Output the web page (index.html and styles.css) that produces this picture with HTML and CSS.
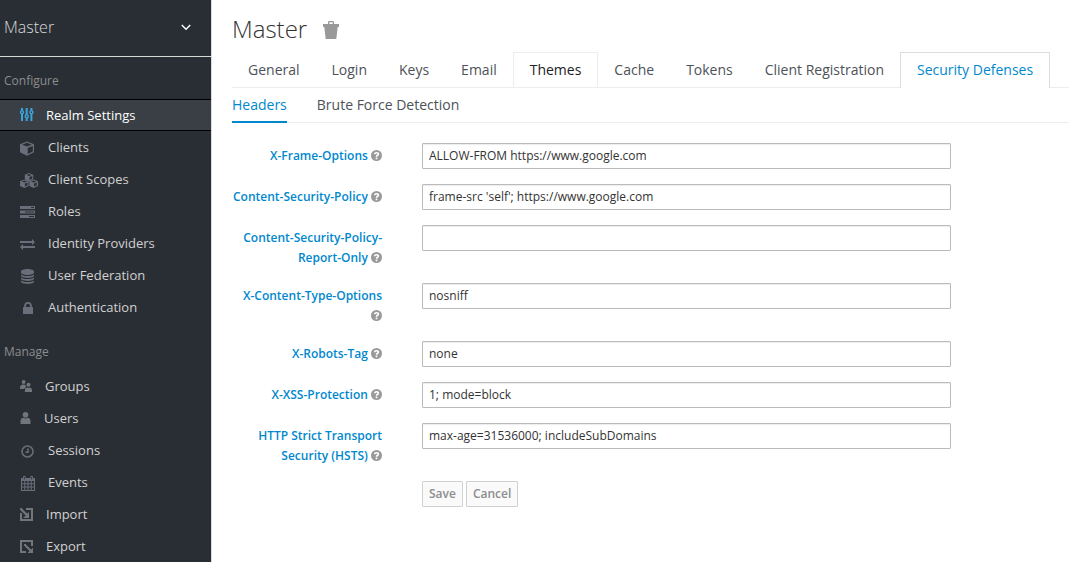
FILE: index.html
```html
<!DOCTYPE html>
<html lang="en">
<head>
<meta charset="utf-8">
<title>Master - Security Defenses</title>
<link rel="stylesheet" href="styles.css">
</head>
<body>
<div class="layout">
  <aside class="sidebar">
    <button class="realm" type="button">
      <span>Master</span>
      <svg class="realm-caret" viewBox="0 0 10 7" aria-hidden="true"><path d="M.8 1 5 5.2 9.200 1"/></svg>
    </button>
    <nav>
      <h2 class="nav-title">Configure</h2>
      <ul class="nav-list nav-configure">
        <li><a class="nav-link active" href="#"><span class="icon icon-14"><svg width="14" height="14" viewBox="0 0 14 14"><path fill-rule="evenodd" d="M1 0h2v2.300q1.200.6 1.200 2T3 6.300V13H1V6.300q-1.200-.6-1.200-2T1 2.300zM2 3.300q-.7 0-.7 1t.7 1 .7-1-.7-1zM5.700 0h2v6.300q1.200.6 1.200 2t-1.200 2V13h-2v-2.700q-1.200-.6-1.200-2t1.200-2zM6.700 7.300q-.7 0-.7 1t.7 1 .7-1-.7-1zM10.400 0h2v2.300q1.200.6 1.200 2t-1.200 2V13h-2V6.300q-1.200-.6-1.200-2t1.200-2zM11.400 3.300q-.7 0-.7 1t.7 1 .7-1-.7-1z"/></svg></span>Realm Settings</a></li>
        <li><a class="nav-link" href="#"><span class="icon icon-16"><svg width="14" height="15" viewBox="0 0 14 15"><path fill-rule="evenodd" d="M7 .5 14 3.300v8L7 14.700 0 11.300v-8zM7 1.800 2.200 3.700 7 5.600l4.800-1.900zM7.700 6.900v6L12.800 10.500V4.900z"/></svg></span>Clients</a></li>
        <li><a class="nav-link" href="#"><span class="icon icon-16"><svg width="18" height="15" viewBox="0 0 18 15"><path fill-rule="evenodd" d="M9 0l4.200 1.700v4.600L9 8.400 4.800 6.300V1.700zM9 1 6.500 2 9 3l2.500-1zM9.500 4v3l2.700-1.300V3z"/><path fill-rule="evenodd" d="M4.400 6.600l4.200 1.700v4.600L4.400 15 0 12.900V8.300zM4.400 7.600l-2.500 1 2.500 1 2.500-1zM4.900 10.600v3l2.700-1.300V9.600z"/><path fill-rule="evenodd" d="M13.600 6.600 18 8.300v4.600L13.600 15l-4.200-2.100V8.300zM13.600 7.600l-2.500 1 2.500 1 2.500-1zM14.100 10.600v3l2.700-1.300V9.600z"/></svg></span>Client Scopes</a></li>
        <li><a class="nav-link" href="#"><span class="icon icon-16"><svg width="15" height="12" viewBox="0 0 15 12"><path fill-rule="evenodd" d="M0 0h15v3H0zM11 1v1h3V1zM0 4.500h15v3H0zM5 5.500v1h9v-1zM0 9h15v3H0zM9 10v1h5v-1z"/></svg></span>Roles</a></li>
        <li><a class="nav-link" href="#"><span class="icon icon-16"><svg width="15" height="11" viewBox="0 0 15 11"><path d="M0 2h12V0l3 3-3 3V4H0zM15 9H3v2L0 8l3-3v2h12z"/></svg></span>Identity Providers</a></li>
        <li><a class="nav-link" href="#"><span class="icon icon-16"><svg class="inset" width="13" height="15" viewBox="0 0 13 15"><path d="M0 2.500C0 1 3 0 6.500 0S13 1 13 2.500v1C13 5 10 6 6.500 6S0 5 0 3.500zM0 5.400C1.300 6.500 3.700 7 6.500 7S11.700 6.500 13 5.400v1.200C13 8 10 9 6.500 9S0 8 0 6.600zM0 8.400C1.300 9.500 3.700 10 6.500 10s5.200-.5 6.500-1.600v1.200c0 1.400-3 2.400-6.500 2.400S0 11 0 9.600zM0 11.400c1.300 1.100 3.700 1.600 6.500 1.600s5.200-.5 6.500-1.600v1.200C13 14 10 15 6.500 15S0 14 0 12.600z"/></svg></span>User Federation</a></li>
        <li><a class="nav-link" href="#"><span class="icon icon-16"><svg class="lock" width="10" height="12" viewBox="0 0 10 12"><path fill-rule="evenodd" d="M1.200 5V3.800a3.800 3.800 0 0 1 7.600 0V5H10v7H0V5zM3 5h4V3.800a2 2 0 0 0-4 0z"/></svg></span>Authentication</a></li>
      </ul>
      <h2 class="nav-title">Manage</h2>
      <ul class="nav-list nav-manage">
        <li><a class="nav-link" href="#"><span class="icon icon-13"><svg width="12" height="12" viewBox="0 0 12 12"><circle cx="3.600" cy="2" r="1.900"/><circle cx="8.500" cy="4.800" r="2"/><path d="M0 9V7.500Q0 4.500 3.600 4.500 5 4.500 5.600 5 5.600 6.500 6.200 7.200 4.500 7.800 4.200 9zM4.900 12v-1.800q0-2.400 2.300-2.600Q8.500 8.500 9.800 7.600 12 7.800 12 10.200V12z"/></svg></span>Groups</a></li>
        <li><a class="nav-link" href="#"><span class="icon icon-12"><svg width="11" height="12" viewBox="0 0 11 12"><circle cx="5.500" cy="2.800" r="2.800"/><path d="M.5 12V9.300Q.5 6 3.500 5.800 5.500 7 7.500 5.800q3 .2 3 3.500V12z"/></svg></span>Users</a></li>
        <li><a class="nav-link" href="#"><span class="icon icon-16"><svg class="inset" width="13" height="13" viewBox="0 0 13 13"><path class="line" d="M6.500 1a5.500 5.500 0 1 0 0 11 5.500 5.500 0 0 0 0-11zM7 3.500v3.700H4.500"/></svg></span>Sessions</a></li>
        <li><a class="nav-link" href="#"><span class="icon icon-16"><svg class="inset" width="14" height="15" viewBox="0 0 14 15"><path fill-rule="evenodd" d="M0 2h2V1a1.300 1.300 0 0 1 2.600 0v1h4.800V1A1.300 1.300 0 0 1 12 1v1h2v13H0zM1 5v2.300h2.300V5zM4.300 5v2.300h2.200V5zM7.500 5v2.300h2.200V5zM10.700 5v2.300H13V5zM1 8.300v2.200h2.300V8.300zM4.300 8.300v2.200h2.200V8.300zM7.500 8.300v2.200h2.200V8.300zM10.700 8.300v2.200H13V8.300zM1 11.500V14h2.300v-2.500zM4.300 11.500V14h2.200v-2.500zM7.500 11.500V14h2.200v-2.500zM10.700 11.500V14H13v-2.500zM2.900 1v2.500h.8V1zM10.300 1v2.500h.8V1z"/></svg></span>Events</a></li>
        <li><a class="nav-link" href="#"><span class="icon icon-14"><svg width="13" height="13" viewBox="0 0 13 13"><path d="M6 0h7v13H0V5h2v6h9V2H6zM1.500 0 7.200 5.700 9 4v6H3l2.700-2.500L0 1.700V0z"/></svg></span>Import</a></li>
        <li><a class="nav-link" href="#"><span class="icon icon-14"><svg width="13" height="13" viewBox="0 0 13 13"><path d="M0 0h13v6h-2V2H2v9h4v2H0zM5.500 4 11 9.600l2-1.800V13H7.500l2-2L4 5.500V4z"/></svg></span>Export</a></li>
      </ul>
    </nav>
  </aside>
  <main class="content">
    <header class="page-head">
      <h1>Master</h1>
      <button class="trash" type="button" aria-label="Delete realm"><svg width="16" height="18" viewBox="0 0 16 18"><path fill-rule="evenodd" d="M0 3h5V1.300Q5 0 6.300 0h3.400Q11 0 11 1.300V3h5v3H0zM6.300 3h3.400V1.300H6.300zM1.300 6h13.400L13.300 18H2.700z"/></svg></button>
    </header>
    <nav class="tabs">
      <a href="#">General</a>
      <a href="#">Login</a>
      <a href="#">Keys</a>
      <a href="#">Email</a>
      <a class="boxed" href="#">Themes</a>
      <a href="#">Cache</a>
      <a href="#">Tokens</a>
      <a href="#">Client Registration</a>
      <a class="boxed current" href="#">Security Defenses</a>
    </nav>
    <nav class="subtabs">
      <a class="current" href="#">Headers</a>
      <a href="#">Brute Force Detection</a>
    </nav>
    <form class="form">
      <svg class="defs" aria-hidden="true"><symbol id="help" viewBox="0 0 10 10"><circle cx="5" cy="5" r="5"/><path class="mark" d="M3.300 3.900Q3.400 2.500 5 2.500q1.700 0 1.700 1.300C6.700 4.800 5 4.800 5 6.100M5 6.900v1.400"/></symbol></svg>
      <div class="row"><label for="f1"><a href="#">X-Frame-Options</a> <svg class="help"><use href="#help"/></svg></label><input id="f1" type="text" value="ALLOW-FROM https://www.google.com"></div>
      <div class="row"><label for="f2"><a href="#">Content-Security-Policy</a> <svg class="help"><use href="#help"/></svg></label><input id="f2" type="text" value="frame-src 'self'; https://www.google.com"></div>
      <div class="row"><label for="f3"><a href="#">Content-Security-Policy-Report-Only</a> <svg class="help"><use href="#help"/></svg></label><input id="f3" type="text" value=""></div>
      <div class="row"><label for="f4"><a href="#">X-Content-Type-Options</a> <svg class="help"><use href="#help"/></svg></label><input id="f4" type="text" value="nosniff"></div>
      <div class="row"><label for="f5"><a href="#">X-Robots-Tag</a> <svg class="help"><use href="#help"/></svg></label><input id="f5" type="text" value="none"></div>
      <div class="row"><label for="f6"><a href="#">X-XSS-Protection</a> <svg class="help"><use href="#help"/></svg></label><input id="f6" type="text" value="1; mode=block"></div>
      <div class="row"><label for="f7"><a href="#">HTTP Strict Transport Security (HSTS)</a> <svg class="help"><use href="#help"/></svg></label><input id="f7" type="text" value="max-age=31536000; includeSubDomains"></div>
      <div class="actions"><button type="submit" disabled>Save</button><button type="button" disabled>Cancel</button></div>
    </form>
  </main>
</div>
</body>
</html>
```
FILE: styles.css
```css
* { box-sizing: border-box; }
body {
  margin: 0;
  background: #fff;
  color: #333;
  font: 12px/20px "Open Sans", "Noto Sans", sans-serif;
}
a { text-decoration: none; color: inherit; }
button, input { font: inherit; }
.layout { display: flex; min-height: 100vh; }

.sidebar {
  flex: 0 0 212px;
  background: #292e34;
  border-right: 1px solid #dddcd8;
}
.realm {
  display: flex;
  align-items: center;
  justify-content: space-between;
  width: 100%;
  height: 57px;
  padding: 0 20px 2px 4px;
  border: 0;
  border-bottom: 1px solid #d5dad6;
  background: none;
  color: #d8dada;
  font-size: 16px;
  font-weight: 300;
}
.realm-caret { width: 10px; height: 7px; fill: none; stroke: #fff; stroke-width: 1.500; }
.nav-title {
  margin: 0;
  padding: 14px 4px 0;
  color: #8b8d8f;
  font-size: 12px;
  font-weight: 400;
  line-height: 20px;
}
.nav-list { margin: 0; padding: 0; list-style: none; }
.nav-configure { padding: 8px 0 5px; }
.nav-manage { padding-top: 8px; }
.nav-link {
  display: flex;
  align-items: center;
  gap: 12px;
  height: 32px;
  padding-left: 20px;
  border: solid transparent;
  border-width: 1px 0;
  color: #d1d1d1;
  font-size: 13px;
}
.nav-link.active { background: #393f44; border-color: #000; color: #fff; }
.icon { display: flex; flex: none; }
.icon svg { flex: none; display: block; overflow: visible; fill: #72767b; }
.active .icon svg { fill: #39a5dc; }
.icon-12 { width: 12px; }
.icon-13 { width: 13px; }
.icon-14 { width: 14px; }
.icon-16 { width: 16px; padding-top: 2px; }
.icon-16 svg { fill: #6a6e7a; }
.icon .inset { margin-left: 1px; }
.icon .lock { margin-left: 3px; }
.icon .line { fill: none; stroke: #6a6e7a; stroke-width: 1.500; }

.content { flex: 1; min-width: 0; padding: 12px 0 40px 20px; }
.page-head { display: flex; align-items: center; gap: 16px; height: 36px; }
.page-head h1 { margin: 0; padding-bottom: 2px; font-size: 24px; font-weight: 300; line-height: 36px; }
.trash { padding: 0; border: 0; background: none; }
.trash svg { display: block; fill: #999; }
.tabs {
  display: flex;
  margin-top: 4px;
  border-bottom: 1px solid #ededed;
  font-size: 14px;
}
.tabs a {
  padding: 7px 15px;
  border: 1px solid transparent;
  border-bottom: 0;
  color: #4d5258;
  white-space: nowrap;
}
.tabs .boxed { padding: 7px 16px; border-color: #ededed; color: #222; }
.tabs .current { margin-bottom: -1px; border-color: #ddd; background: #fff; color: #0088ce; }
.subtabs {
  display: flex;
  gap: 30px;
  border-bottom: 1px solid #ededed;
  font-size: 14px;
}
.subtabs a { margin-bottom: -1px; padding: 7px 0 6px; border-bottom: 2px solid transparent; color: #4d5258; }
.subtabs .current { border-color: #0088ce; color: #0088ce; }

.form { display: grid; gap: 15px; padding-top: 20px; }
.row { display: grid; grid-template-columns: 190px 9fr 2fr; align-items: start; }
.row label {
  padding: 3px 40px 0 0;
  color: #0088ce;
  font-weight: 600;
  text-align: right;
}
.row input {
  min-width: 0;
  height: 26px;
  padding: 1px 6px 3px;
  border: 1px solid #bbb;
  border-radius: 1px;
  background: #fff;
  box-shadow: inset 0 1px 1px rgba(3, 3, 3, 0.075);
  color: #333;
}
.defs { display: none; }
.help { width: 11px; height: 11px; vertical-align: -1px; fill: #999; }
.mark { fill: none; stroke: #fff; stroke-width: 1.500; }
.actions { display: flex; gap: 3px; padding-left: 190px; }
.actions button {
  height: 26px;
  padding: 0 6px;
  border: 1px solid #d1d1d1;
  border-radius: 1px;
  background: #fafafa;
  color: #8b8d8f;
  font-weight: 600;
}
```
